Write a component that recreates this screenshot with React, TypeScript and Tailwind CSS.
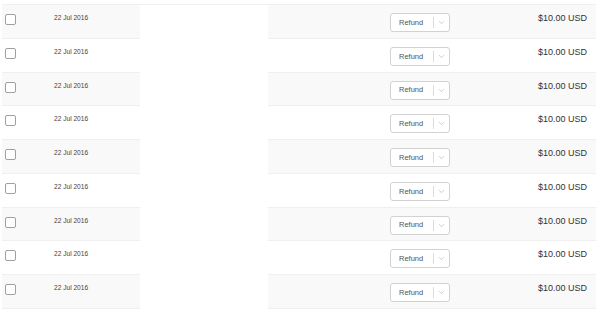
import { ChevronDown } from "lucide-react";

const rows = Array.from({ length: 9 }, (_, i) => ({
  id: i,
  date: "22 Jul 2016",
  amount: "$10.00 USD",
}));

export default function App() {
  return (
    <div className="w-[600px] h-[316px] bg-white pt-[4px] font-['Liberation_Sans',Arial,sans-serif] text-[#333]">
      <div className="mx-[2px] w-[594px] border-t border-[#f0f0f0]">
        {rows.map((row) => (
          <div
            key={row.id}
            className={`flex h-[33.75px] ${row.id % 2 === 0 ? "bg-[#f9f9f9]" : "bg-white"}`}
          >
            <div className="w-[38px] pl-[3px] pt-[9px] border-b border-[#efefef]">
              <span className="block w-[11px] h-[11px] border border-[#a0a0a0] rounded-[2px] bg-white" />
            </div>
            <div className="w-[100px] pl-[14px] pt-[10px] text-[6.6px] leading-none text-[#444] border-b border-[#efefef]">
              {row.date}
            </div>
            <div className="w-[128px] bg-white" />
            <div className="flex-1 flex items-start justify-between pl-[122px] pr-[9px] border-b border-[#efefef]">
              <div className="mt-[8px] flex items-center h-[19px] w-[60px] border border-[#d2d2d2] rounded-[3px] bg-white">
                <span className="pl-[8px] w-[42px] text-[7.5px] text-[#555]">Refund</span>
                <span className="h-[11px] border-l border-[#dcdcdc]" />
                <ChevronDown className="ml-[3px] text-[#aaa]" size={9} strokeWidth={1.5} />
              </div>
              <span className="mt-[8px] text-[9px] leading-[11px] text-[#333]">{row.amount}</span>
            </div>
          </div>
        ))}
      </div>
    </div>
  );
}
